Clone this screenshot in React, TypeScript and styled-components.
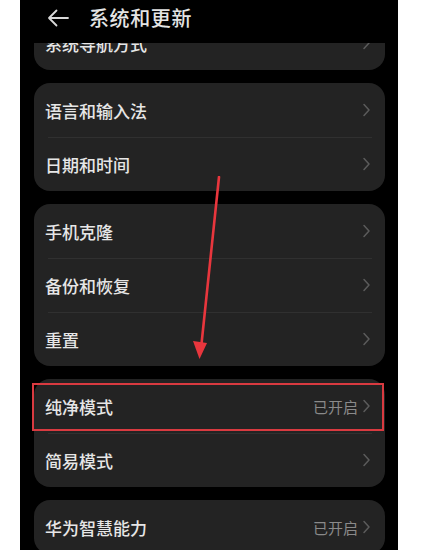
import React from 'react'
import styled, { createGlobalStyle } from 'styled-components'

interface Item {
  label: string
  status?: string
  highlight?: boolean
}

const groups: Item[][] = [
  [{ label: '系统导航方式' }],
  [{ label: '语言和输入法' }, { label: '日期和时间' }],
  [{ label: '手机克隆' }, { label: '备份和恢复' }, { label: '重置' }],
  [{ label: '纯净模式', status: '已开启', highlight: true }, { label: '简易模式' }],
  [{ label: '华为智慧能力', status: '已开启' }],
]

const GlobalStyle = createGlobalStyle`
  html, body {
    margin: 0;
    padding: 0;
    background: #fff;
  }
  body {
    font-family: "Noto Sans CJK SC", "Noto Sans", sans-serif;
  }
`

const Chevron = () => (
  <svg width="9" height="16" viewBox="0 0 9 16" fill="none">
    <path d="M2 2.5 L7 8 L2 13.5" stroke="#5b5b5b" strokeWidth="1.5" strokeLinecap="round" strokeLinejoin="round" />
  </svg>
)

const BackArrow = () => (
  <svg width="22" height="18" viewBox="0 0 22 18" fill="none">
    <path d="M21 9 H2 M9.5 1.5 L2 9 L9.5 16.5" stroke="#d8d8d8" strokeWidth="1.8" strokeLinecap="round" strokeLinejoin="round" />
  </svg>
)

const App: React.FC = () => {
  return (
    <>
      <GlobalStyle />
      <Phone>
        <Header>
          <BackArrow />
          <Title>系统和更新</Title>
        </Header>
        <Content>
          {groups.map((items, gi) => (
            <Card key={gi} $clipped={gi === 0}>
              {items.map((item, i) => (
                <Row key={item.label} $divider={i > 0}>
                  <Label>{item.label}</Label>
                  <Trail>
                    {item.status && <Status>{item.status}</Status>}
                    <Chevron />
                  </Trail>
                  {item.highlight && <Highlight />}
                </Row>
              ))}
            </Card>
          ))}
        </Content>
        <Pointer width="40" height="200" viewBox="0 0 40 200">
          <line x1="30" y1="1" x2="12.5" y2="168" stroke="#e8363d" strokeWidth="2.6" strokeLinecap="round" />
          <polygon points="4,165 18,167 10.5,183" fill="#e8363d" />
        </Pointer>
      </Phone>
    </>
  )
}

const Phone = styled.div`
  position: relative;
  width: 378px;
  height: 550px;
  margin-left: 20px;
  background: #000;
  overflow: hidden;
`

const Header = styled.div`
  height: 43px;
  display: flex;
  align-items: center;
  padding: 0 0 8px 27px;
  box-sizing: border-box;
  gap: 20px;
`

const Title = styled.h1`
  margin: 0;
  font-size: 20px;
  font-weight: 500;
  color: #e4e4e4;
  letter-spacing: 0.6px;
`

const Content = styled.div`
  height: 507px;
  overflow: hidden;
  display: flex;
  flex-direction: column;
  gap: 13px;
  padding: 0 13px 0 14px;
`

const Card = styled.div<{ $clipped?: boolean }>`
  flex-shrink: 0;
  background: #232323;
  border-radius: 16px;
  margin-top: ${(p) => (p.$clipped ? '-27px' : '0')};
`

const Row = styled.div<{ $divider?: boolean }>`
  position: relative;
  height: 54px;
  display: flex;
  align-items: center;
  justify-content: space-between;
  padding: 0 14px 0 11px;
  box-sizing: border-box;

  &::before {
    content: '';
    display: ${(p) => (p.$divider ? 'block' : 'none')};
    position: absolute;
    top: 0;
    left: 14px;
    right: 13px;
    height: 1px;
    background: #303030;
  }
`

const Label = styled.span`
  font-size: 17px;
  font-weight: 500;
  color: #e6e6e6;
`

const Trail = styled.div`
  display: flex;
  align-items: center;
  gap: 4px;
`

const Status = styled.span`
  font-size: 15px;
  color: #8a8a8a;
`

const Highlight = styled.div`
  position: absolute;
  top: 4px;
  bottom: 2px;
  left: -2px;
  right: 1px;
  border: 2px solid #d93a40;
  pointer-events: none;
`

const Pointer = styled.svg`
  position: absolute;
  left: 169px;
  top: 176px;
`

export default App
